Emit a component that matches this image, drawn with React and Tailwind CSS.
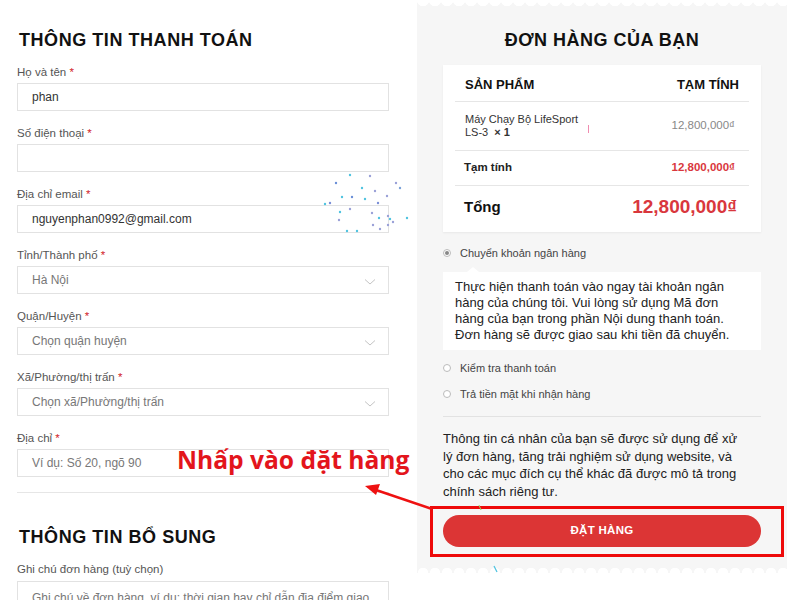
import React from "react";

const Label = ({ children, req = true }) => (
  <div className="text-[11.5px] leading-[16px] text-[#555] h-4">
    {children}
    {req && <span className="text-[#d2232a]"> *</span>}
  </div>
);

const Chevron = () => (
  <svg width="12" height="8" viewBox="0 0 12 8" className="absolute right-[12px] top-[11px]">
    <polyline points="1,1.5 6,6 11,1.5" fill="none" stroke="#c4c4c4" strokeWidth="1" />
  </svg>
);

const Field = ({ label, value, placeholder, select, req }) => (
  <div className="mb-[14px]">
    <Label req={req}>{label}</Label>
    <div className="relative mt-[3px] h-[28px] border border-[#e2e2e2] bg-white flex items-center pl-[14px] text-[12px]">
      {value ? (
        <span className="text-[#333]">{value}</span>
      ) : (
        <span className="text-[#777]">{placeholder}</span>
      )}
      {select && <Chevron />}
    </div>
  </div>
);

const Radio = ({ checked, children }) => (
  <div className="flex items-center h-[14px] pl-0 text-[11px] text-[#444]">
    <span className="w-[8px] h-[8px] rounded-full border border-[#bbb] bg-white flex items-center justify-center mr-[9px]">
      {checked && <span className="w-[4px] h-[4px] rounded-full bg-[#888]" />}
    </span>
    {children}
  </div>
);

export default function App() {
  return (
    <div
      className="relative w-[800px] h-[600px] overflow-hidden bg-white flex"
      style={{ fontFamily: '"Liberation Sans", Arial, sans-serif' }}
    >
      {/* Left column */}
      <div className="w-[372px] ml-[17px] pt-[30px]">
        <h2 className="text-[18px] leading-[20px] font-bold text-[#111] tracking-[0.55px] ml-[2px]">
          THÔNG TIN THANH TOÁN
        </h2>
        <div className="mt-[14px]">
          <Field label="Họ và tên" value="phan" />
          <Field label="Số điện thoại" />
          <Field label="Địa chỉ email" value="nguyenphan0992@gmail.com" />
          <Field label="Tỉnh/Thành phố" placeholder="Hà Nội" select />
          <Field label="Quận/Huyện" placeholder="Chọn quận huyện" select />
          <Field label="Xã/Phường/thị trấn" placeholder="Chọn xã/Phường/thị trấn" select />
          <div>
            <Label>Địa chỉ</Label>
            <div className="mt-[3px] h-[28px] border border-[#e2e2e2] bg-white flex items-center pl-[14px] text-[12px] text-[#777]">
              Ví dụ: Số 20, ngõ 90
            </div>
          </div>
        </div>
        <div className="mt-[15px] h-px bg-[#e6e6e6]" />
        <h2 className="mt-[34px] text-[18px] leading-[20px] font-bold text-[#111] tracking-[0.55px] ml-[2px]">
          THÔNG TIN BỔ SUNG
        </h2>
        <div className="mt-[14px]">
          <Label req={false}>Ghi chú đơn hàng (tuỳ chọn)</Label>
          <div className="mt-[4px] h-[60px] border border-[#e2e2e2] bg-white pl-[14px] pt-[7px] text-[12px] text-[#777] whitespace-nowrap overflow-hidden">
            Ghi chú về đơn hàng, ví dụ: thời gian hay chỉ dẫn địa điểm giao
          </div>
        </div>
      </div>

      {/* Right panel */}
      <div className="relative ml-[28px] w-[370px] h-[573px] bg-[#f6f6f6] px-[26px] pt-[30px]">
        <div className="absolute left-0 right-0 top-0 h-[8px] bg-[radial-gradient(circle_at_6px_0,#ffffff_6px,transparent_6.5px)] bg-[length:12px_8px] bg-repeat-x" />
        <div className="absolute left-0 right-0 bottom-0 h-[6px] bg-[radial-gradient(circle_at_6px_100%,#ffffff_5px,transparent_5.5px)] bg-[length:12px_6px] bg-repeat-x" />
        <h2 className="text-center text-[18px] leading-[20px] font-bold text-[#111] tracking-[0.5px]">
          ĐƠN HÀNG CỦA BẠN
        </h2>
        <div className="mt-[15px] h-[167px] bg-white px-[12px] shadow-[0_1px_2px_rgba(0,0,0,0.06)]">
          <div className="h-[37px] pt-[12px] px-[10px] flex justify-between text-[13px] leading-[16px] font-bold text-[#111] border-b border-[#e6e6e6]">
            <span>SẢN PHẨM</span>
            <span>TẠM TÍNH</span>
          </div>
          <div className="relative h-[49px] px-[10px] flex items-center justify-between border-b border-[#e6e6e6]">
            <div className="text-[11px] leading-[13px] text-[#333]">
              Máy Chạy Bộ LifeSport
              <br />
              LS-3 <span className="font-bold">&nbsp;× 1</span>
            </div>
            <span className="absolute left-[133px] top-[23px] w-px h-[8px] bg-[#f08cb0]" />
            <span className="text-[11.5px] text-[#888] mr-[4px]">12,800,000₫</span>
          </div>
          <div className="h-[35px] pl-[9px] pr-[14px] flex items-center justify-between border-b border-[#e6e6e6]">
            <span className="text-[11.5px] font-bold text-[#222]">Tạm tính</span>
            <span className="text-[11.5px] font-bold text-[#d9373d]">12,800,000₫</span>
          </div>
          <div className="h-[45px] pl-[9px] pr-[12px] flex items-center justify-between pb-[3px]">
            <span className="text-[15px] font-bold text-[#111]">Tổng</span>
            <span className="text-[19px] font-bold text-[#d9373d]">12,800,000₫</span>
          </div>
        </div>

        <div className="mt-[14px]">
          <Radio checked>Chuyển khoản ngân hàng</Radio>
        </div>
        <div className="relative mt-[12px] h-[78px] bg-white pt-[7px] px-[12px] text-[13px] leading-[16px] text-[#222] whitespace-nowrap">
          <span className="absolute -top-[5px] left-[24px] w-0 h-0 border-l-[6px] border-r-[6px] border-b-[5px] border-l-transparent border-r-transparent border-b-white" />
          Thực hiện thanh toán vào ngay tài khoản ngân
          <br />
          hàng của chúng tôi. Vui lòng sử dụng Mã đơn
          <br />
          hàng của bạn trong phần Nội dung thanh toán.
          <br />
          Đơn hàng sẽ được giao sau khi tiền đã chuyển.
        </div>
        <div className="mt-[11px]">
          <Radio>Kiểm tra thanh toán</Radio>
        </div>
        <div className="mt-[12px]">
          <Radio>Trả tiền mặt khi nhận hàng</Radio>
        </div>
        <div className="mt-[15px] h-px bg-[#e2e2e2]" />
        <div className="mt-[13px] text-[13px] leading-[17.7px] text-[#222] whitespace-nowrap">
          Thông tin cá nhân của bạn sẽ được sử dụng để xử
          <br />
          lý đơn hàng, tăng trải nghiệm sử dụng website, và
          <br />
          cho các mục đích cụ thể khác đã được mô tả trong
          <br />
          chính sách riêng tư.
        </div>
        <button className="mt-[14px] w-full h-[32px] rounded-full bg-[#dc3535] text-white text-[11.5px] font-bold tracking-[0.3px]">
          ĐẶT HÀNG
        </button>
      </div>

      {/* Annotation overlay */}
      <div
        className="absolute left-[177px] top-[444px] text-[24.6px] leading-[32px] font-bold text-[#e3151c] whitespace-nowrap"
        style={{ fontFamily: '"Open Sans", sans-serif' }}
      >
        Nhấp vào đặt hàng
      </div>
      <div className="absolute left-[430px] top-[506px] w-[354px] h-[51px] border-[3px] border-[#ee0a0a]" />
      <svg className="absolute left-0 top-0 pointer-events-none" width="800" height="600">
        <line x1="432" y1="509" x2="376" y2="490" stroke="#ee1111" strokeWidth="2.5" />
        <polygon points="365,486 380,484 376,495" fill="#ee1111" />
        {[
          [350, 175, "#4fc3e0"], [370, 176, "#9aa0d8"], [336, 183, "#6a8fd8"], [362, 188, "#4fc3e0"],
          [396, 183, "#9aa0d8"], [400, 188, "#7aa0d8"], [375, 191, "#9aa0d8"], [365, 199, "#4fc3e0"],
          [352, 197, "#6a8fd8"], [342, 197, "#4fc3e0"], [387, 196, "#9aa0d8"], [378, 203, "#7a8fd8"],
          [325, 204, "#4fc3e0"], [330, 203, "#7a8fd8"], [350, 209, "#9aa0d8"], [340, 212, "#4fc3e0"],
          [372, 213, "#9aa0d8"], [388, 216, "#9aa0d8"], [379, 218, "#4fc3e0"], [390, 219, "#4fc3e0"],
          [407, 218, "#4fc3e0"], [393, 222, "#9aa0d8"], [373, 225, "#9aa0d8"], [380, 229, "#9aa0d8"],
          [388, 225, "#9aa0d8"], [347, 231, "#4fc3e0"], [357, 231, "#4fc3e0"], [339, 220, "#9aa0d8"],
        ].map(([x, y, c], i) => (
          <circle key={i} cx={x} cy={y} r="1.2" fill={c} />
        ))}
        <line x1="479" y1="505" x2="481" y2="510" stroke="#9acd60" strokeWidth="1" />
        <line x1="494" y1="566" x2="497" y2="572" stroke="#4fc3e0" strokeWidth="1.2" />
      </svg>
    </div>
  );
}
